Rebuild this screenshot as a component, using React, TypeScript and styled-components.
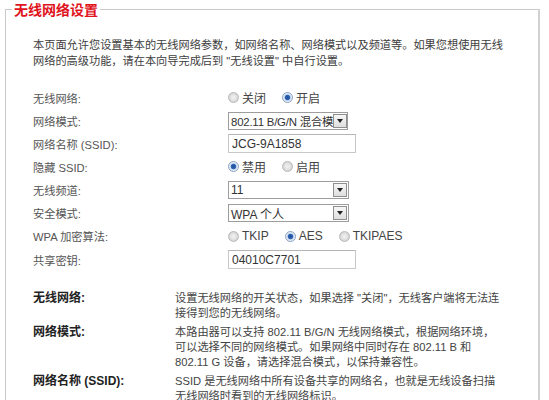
import React from "react";
import styled, { createGlobalStyle } from "styled-components";

const Global = createGlobalStyle`
  html, body { margin: 0; padding: 0; background: #fff; }
  body {
    font-family: "Liberation Sans", Arial, "Noto Sans CJK SC", sans-serif;
    font-size: 11.2px;
    color: #3a3a3a;
  }
`;

const Page = styled.div`
  padding: 0 0 0 5px;
`;

const Box = styled.fieldset`
  margin: 0;
  padding: 0 0 0 6px;
  width: 535px;
  min-height: 430px;
  box-sizing: border-box;
  border: 1px solid #c9c9c9;
  border-right: 2px solid #d2d2d2;
`;

const Legend = styled.legend`
  padding: 0 2px;
  margin: 0;
  font-size: 14px;
  font-weight: bold;
  line-height: 18px;
  color: #e0141c;
  font-family: "Noto Sans CJK SC", sans-serif;
`;

const Inner = styled.div`
  padding: 19px 0 0 21px;
`;

const Intro = styled.p`
  margin: 0;
  line-height: 16px;
  color: #3d3d3d;
  white-space: nowrap;
`;

const Form = styled.div`
  margin-top: 17px;
  display: grid;
  grid-template-columns: 195px 1fr;
  grid-auto-rows: 23.15px;
  align-items: center;
`;

const Label = styled.div`
  color: #555;
  white-space: nowrap;
`;

const Field = styled.div`
  display: flex;
  align-items: center;
`;

const Option = styled.label`
  display: inline-flex;
  align-items: center;
  gap: 3px;
  margin-right: 16px;
  color: #444;
  font-size: 12px;
`;

const Dot = styled.span<{ $on?: boolean }>`
  display: inline-block;
  width: 11px;
  height: 11px;
  border-radius: 50%;
  box-sizing: border-box;
  border: 1px solid ${(p) => (p.$on ? "#8aa3c4" : "#b9b9b9")};
  background: ${(p) =>
    p.$on
      ? "radial-gradient(circle, #1f4f9a 0, #2c62b3 2.2px, #cfdcef 3.2px, #f4f6fa 5px)"
      : "radial-gradient(circle, #f2f2f2 0, #e2e2e2 3px, #cfcfcf 5px)"};
`;

const Select = styled.div<{ $w: number; $gap?: boolean }>`
  display: flex;
  align-items: center;
  width: ${(p) => p.$w}px;
  height: 18px;
  box-sizing: border-box;
  border: 1px solid #9d9d9d;
  padding-right: ${(p) => (p.$gap ? 1 : 0)}px;
  background: #fff;
`;

const SelectText = styled.span<{ $tight?: boolean }>`
  flex: 1;
  overflow: hidden;
  white-space: nowrap;
  padding-left: 2px;
  font-size: ${(p) => (p.$tight ? 11.4 : 12)}px;
  letter-spacing: ${(p) => (p.$tight ? -0.2 : 0)}px;
  color: #333;
`;

const Arrow = styled.span`
  flex: none;
  width: 14px;
  height: 14px;
  box-sizing: border-box;
  border: 1px solid #8f8f8f;
  background: linear-gradient(#f7f7f7, #dedede);
  display: flex;
  align-items: center;
  justify-content: center;
  &::after {
    content: "";
    border-left: 3px solid transparent;
    border-right: 3px solid transparent;
    border-top: 4px solid #222;
  }
`;

const Input = styled.div`
  width: 128px;
  height: 19px;
  box-sizing: border-box;
  border: 1px solid #c9c9c9;
  border-top-color: #b5b5b5;
  padding-left: 3px;
  display: flex;
  align-items: center;
  font-size: 12px;
  color: #333;
`;

const Help = styled.div`
  margin-top: 20px;
  display: grid;
  grid-template-columns: 142px 1fr;
  row-gap: 4px;
  line-height: 15px;
`;

const HelpLabel = styled.div`
  font-weight: bold;
  color: #222;
  font-size: 12px;
  white-space: nowrap;
`;

const HelpText = styled.div`
  color: #444;
  white-space: nowrap;
`;

const Radio = ({ on, children }: { on?: boolean; children: React.ReactNode }) => (
  <Option>
    <Dot $on={on} />
    {children}
  </Option>
);

export default function App() {
  return (
    <>
      <Global />
      <Page>
        <Box>
          <Legend>无线网络设置</Legend>
          <Inner>
            <Intro>
              本页面允许您设置基本的无线网络参数，如网络名称、网络模式以及频道等。如果您想使用无线
              <br />
              网络的高级功能，请在本向导完成后到 "无线设置" 中自行设置。
            </Intro>
            <Form>
              <Label>无线网络:</Label>
              <Field>
                <Radio>关闭</Radio>
                <Radio on>开启</Radio>
              </Field>
              <Label>网络模式:</Label>
              <Field>
                <Select $w={120}>
                  <SelectText $tight>802.11 B/G/N 混合模式</SelectText>
                  <Arrow />
                </Select>
              </Field>
              <Label>网络名称 (SSID):</Label>
              <Field>
                <Input>JCG-9A1858</Input>
              </Field>
              <Label>隐藏 SSID:</Label>
              <Field>
                <Radio on>禁用</Radio>
                <Radio>启用</Radio>
              </Field>
              <Label>无线频道:</Label>
              <Field>
                <Select $w={121} $gap>
                  <SelectText>11</SelectText>
                  <Arrow />
                </Select>
              </Field>
              <Label>安全模式:</Label>
              <Field>
                <Select $w={121} $gap>
                  <SelectText>WPA 个人</SelectText>
                  <Arrow />
                </Select>
              </Field>
              <Label>WPA 加密算法:</Label>
              <Field>
                <Radio>TKIP</Radio>
                <Radio on>AES</Radio>
                <Radio>TKIPAES</Radio>
              </Field>
              <Label>共享密钥:</Label>
              <Field>
                <Input>04010C7701</Input>
              </Field>
            </Form>
            <Help>
              <HelpLabel>无线网络:</HelpLabel>
              <HelpText>
                设置无线网络的开关状态，如果选择 "关闭"，无线客户端将无法连
                <br />
                接得到您的无线网络。
              </HelpText>
              <HelpLabel>网络模式:</HelpLabel>
              <HelpText>
                本路由器可以支持 802.11 B/G/N 无线网络模式，根据网络环境，
                <br />
                可以选择不同的网络模式。如果网络中同时存在 802.11 B 和
                <br />
                802.11 G 设备，请选择混合模式，以保持兼容性。
              </HelpText>
              <HelpLabel>网络名称 (SSID):</HelpLabel>
              <HelpText>
                SSID 是无线网络中所有设备共享的网络名，也就是无线设备扫描
                <br />
                无线网络时看到的无线网络标识。
              </HelpText>
            </Help>
          </Inner>
        </Box>
      </Page>
    </>
  );
}
